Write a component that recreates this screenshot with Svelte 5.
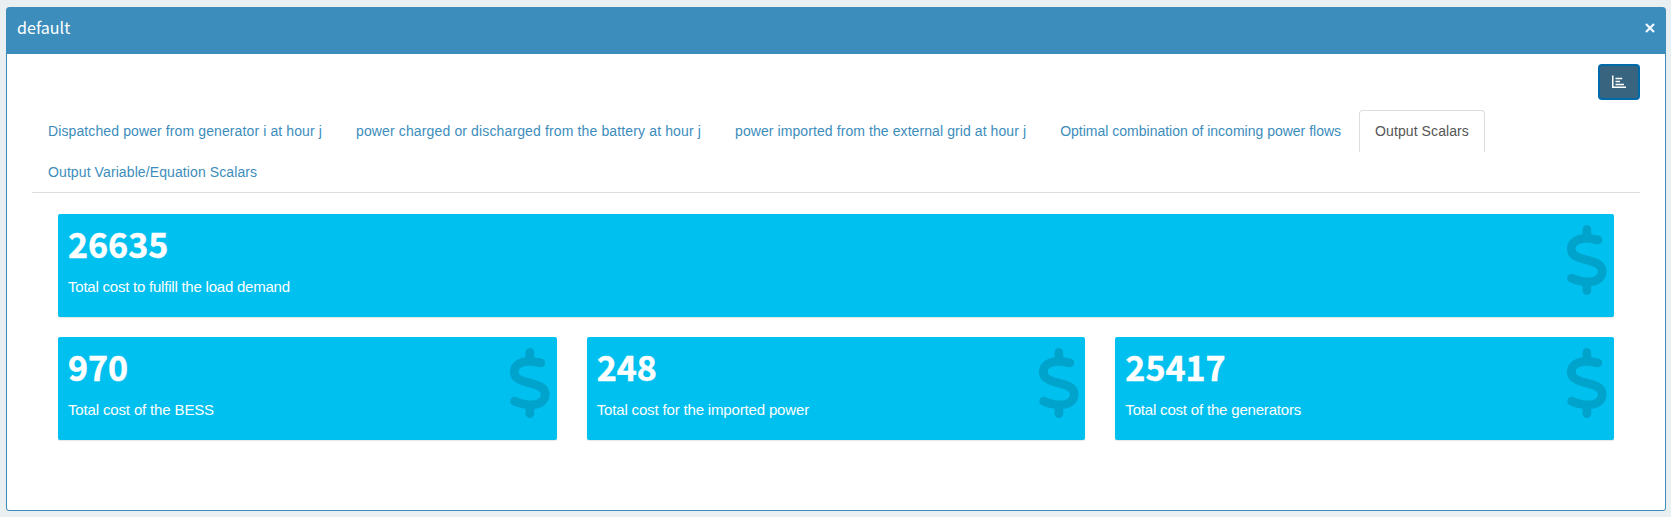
<script>
  const tabs = [
    { label: 'Dispatched power from generator i at hour j', tracking: 0.11 },
    { label: 'power charged or discharged from the battery at hour j', tracking: 0.135 },
    { label: 'power imported from the external grid at hour j', tracking: 0.085 },
    { label: 'Optimal combination of incoming power flows', tracking: 0 },
    { label: 'Output Scalars', tracking: 0.09 },
    { label: 'Output Variable/Equation Scalars', tracking: 0.1 },
  ];
  let active = $state(4);

  const rows = [
    [{ value: '26635', label: 'Total cost to fulfill the load demand', tracking: -0.225 }],
    [
      { value: '970', label: 'Total cost of the BESS', tracking: -0.15 },
      { value: '248', label: 'Total cost for the imported power', tracking: -0.16 },
      { value: '25417', label: 'Total cost of the generators', tracking: -0.185 },
    ],
  ];
</script>

<section class="box">
  <header>
    <h3>default</h3>
    <button class="close" aria-label="Close">
      <svg width="10" height="10" viewBox="0 0 10 10"><path d="M1 1 9 9M9 1 1 9" /></svg>
    </button>
  </header>
  <div class="body">
    <div class="toolbar">
      <button class="chart" aria-label="Toggle chart">
        <svg width="16" height="14" viewBox="0 0 16 14">
          <path d="M1.75 .6V12.25H15M4.5 3.5H11.2M4.5 6.4H9M4.5 9.4H13" />
        </svg>
      </button>
    </div>
    <ul>
      {#each tabs as tab, i}
        <li>
          <button
            class="tab"
            class:active={i === active}
            style:letter-spacing="{tab.tracking}px"
            onclick={() => (active = i)}>{tab.label}</button>
        </li>
      {/each}
    </ul>
    <div class="content">
      {#each rows as row}
        <div class="row">
          {#each row as card}
            <div class="card">
              <div class="value">{card.value}</div>
              <p style:letter-spacing="{card.tracking}px">{card.label}</p>
              <svg class="dollar" viewBox="0 0 320 512">
                <path d="M160 0c17.7 0 32 14.3 32 32V67.7c1.6 .2 3.1 .4 4.7 .7c.4 .1 .7 .1 1.1 .2l48 8.8c17.4 3.2 28.9 19.9 25.7 37.2s-19.9 28.9-37.2 25.7l-47.5-8.7c-31.3-4.6-58.9-1.5-78.3 6.2s-27.2 18.3-29 28.1c-2 10.7-.5 16.7 1.2 20.4c1.8 3.9 5.5 8.3 12.8 13.2c16.3 10.7 41.3 17.7 73.7 26.3l2.9 .8c28.6 7.6 63.6 16.8 89.6 33.8c14.2 9.3 27.6 21.9 35.9 39.5c8.5 17.9 10.3 37.9 6.4 59.2c-6.9 38-33.1 63.4-65.6 76.7c-13.7 5.6-28.6 9.2-44.4 11V480c0 17.7-14.3 32-32 32s-32-14.3-32-32V445.1c-.4-.1-.9-.1-1.3-.2l-.2 0 0 0c-24.4-3.8-64.5-14.3-91.5-26.3c-16.1-7.2-23.4-26.1-16.2-42.2s26.1-23.4 42.2-16.2c20.9 9.3 55.3 18.5 75.2 21.6c31.9 4.7 58.2 2 76-5.3c16.9-6.9 24.6-16.9 26.8-28.9c1.9-10.6 .4-16.7-1.3-20.4c-1.9-4-5.6-8.4-13-13.3c-16.4-10.7-41.5-17.7-74-26.3l-2.8-.7 0 0C119.4 279.3 84.4 270 58.4 253c-14.2-9.3-27.5-22-35.8-39.6c-8.4-17.9-10.1-37.9-6.1-59.2C23.7 116 52.3 91.2 84.8 78.3c13.3-5.3 27.9-8.9 43.2-11V32c0-17.7 14.3-32 32-32z" />
              </svg>
            </div>
          {/each}
        </div>
      {/each}
    </div>
  </div>
</section>

<style>
  :global(body) {
    background: #eaeff2;
  }
  :global(#app) {
    display: flow-root;
  }
  * {
    box-sizing: border-box;
  }
  button {
    font: inherit;
    margin: 0;
    cursor: pointer;
  }
  .box {
    margin: 7px 5px 0 6px;
    height: 504px;
    background: #fff;
    border: 1px solid #3c8dbc;
    border-radius: 3px;
    box-shadow: 0 1px 1px rgba(0, 0, 0, 0.1);
    font: 14px/20px 'Liberation Sans', Arial, sans-serif;
    color: #333;
  }
  header {
    display: flex;
    justify-content: space-between;
    height: 46px;
    padding: 9px 10px 0;
    background: #3c8dbc;
    color: #fff;
  }
  h3 {
    margin: 0;
    font: 400 16.1px/20px 'Noto Sans CJK SC', sans-serif;
  }
  .close {
    display: flex;
    height: 20px;
    padding: 6px 0 0;
    border: 0;
    background: none;
  }
  .close path {
    stroke: #f4f8fb;
    stroke-width: 2.2;
  }
  .body {
    padding: 10px 25px 0;
  }
  .toolbar {
    display: flex;
    justify-content: flex-end;
  }
  .chart {
    display: flex;
    align-items: center;
    justify-content: center;
    width: 42px;
    height: 36px;
    padding: 0;
    border: 2px solid #0069aa;
    border-radius: 4px;
    background: #39647f;
  }
  .chart path {
    fill: none;
    stroke: #fff;
    stroke-width: 1.5;
  }
  ul {
    display: flex;
    flex-wrap: wrap;
    list-style: none;
    margin: 10px 0 0;
    padding: 0;
    border-bottom: 1px solid #ddd;
  }
  li {
    height: 41px;
  }
  .tab {
    display: block;
    height: 42px;
    margin-right: 2px;
    padding: 9px 15px 11px;
    border: 1px solid transparent;
    border-bottom: 0;
    border-radius: 4px 4px 0 0;
    background: none;
    color: #3c8dbc;
    white-space: nowrap;
  }
  .tab.active {
    border-color: #ddd;
    background: #fff;
    color: #555;
  }
  .content {
    display: flex;
    flex-direction: column;
    gap: 20px;
    padding: 21px 26px 0;
  }
  .row {
    display: flex;
    gap: 30px;
  }
  .card {
    position: relative;
    flex: 1;
    height: 103px;
    padding: 9px 10px 10px;
    border-radius: 2px;
    background: #00c0ef;
    box-shadow: 0 1px 1px rgba(0, 0, 0, 0.1);
    color: #fff;
  }
  .value {
    height: 42px;
    margin-bottom: 11px;
    font: 700 34px/42px 'Noto Sans CJK SC', sans-serif;
    -webkit-text-stroke: 0.5px #fff;
  }
  p {
    margin: 0;
    font-size: 15px;
    line-height: 21px;
  }
  .dollar {
    position: absolute;
    top: 11px;
    right: 5px;
    width: 43.75px;
    height: 70px;
    fill: rgba(0, 0, 0, 0.15);
  }
</style>
